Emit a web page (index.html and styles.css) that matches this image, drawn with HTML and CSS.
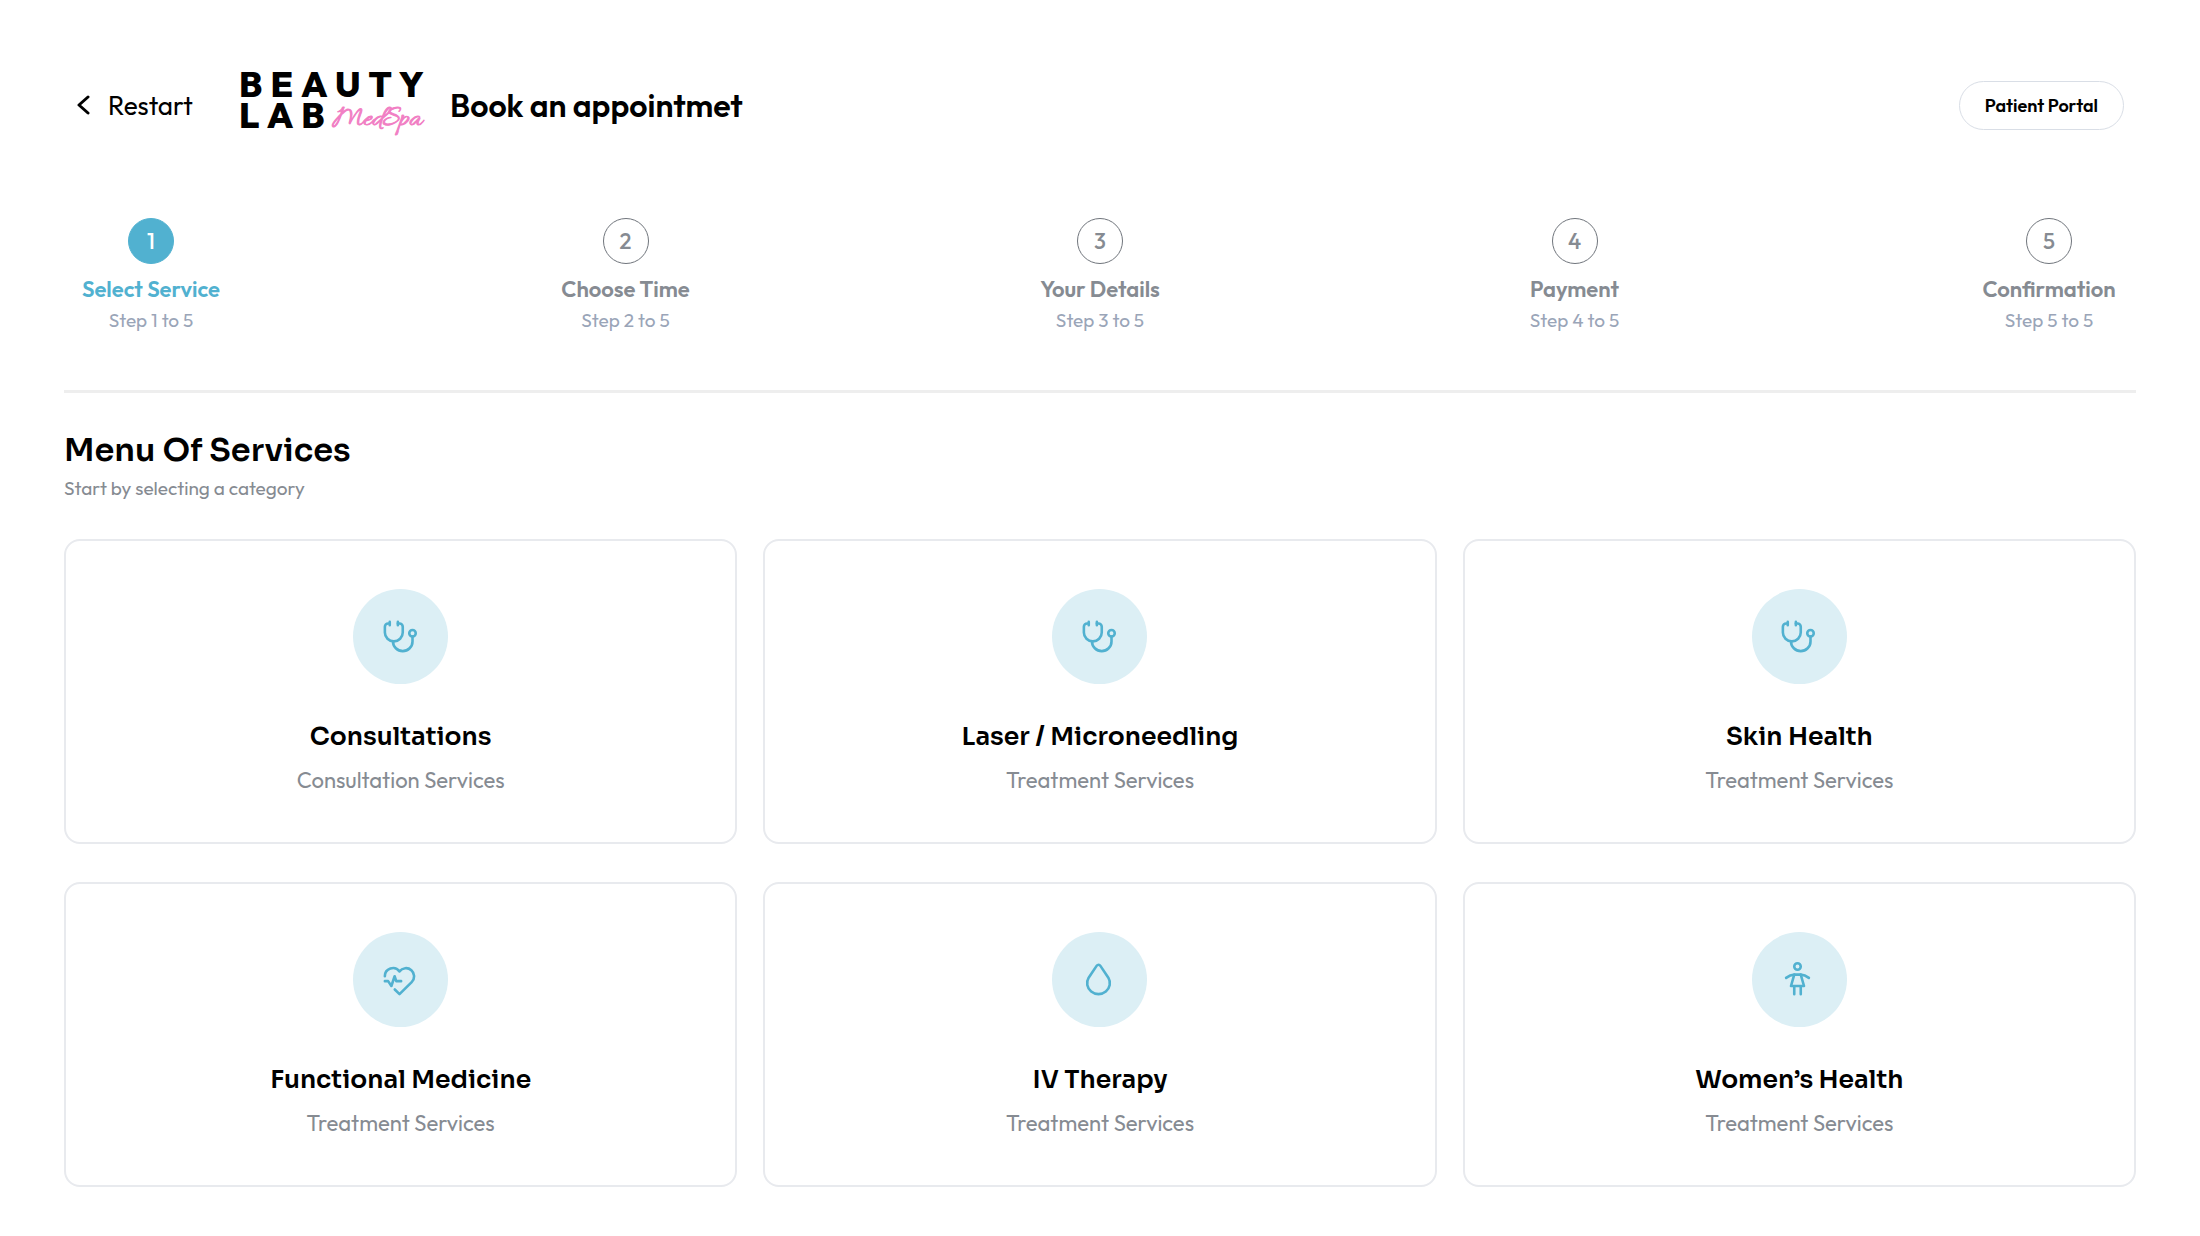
FILE: index.html
```html
<!DOCTYPE html>
<html lang="en">
<head>
  <meta charset="UTF-8">
  <meta name="viewport" content="width=device-width, initial-scale=1.0">
  <title>Book an appointment - Beauty Lab MedSpa</title>
  <link rel="stylesheet" href="styles.css">
</head>
<body>
  <!-- icon shapes shared by the service cards -->
  <svg class="icon-defs" aria-hidden="true">
    <symbol id="icon-stethoscope" viewBox="0 0 24 24">
      <path d="M6 4h-1a2 2 0 0 0 -2 2v3.5a5.5 5.5 0 0 0 11 0v-3.5a2 2 0 0 0 -2 -2h-1"/>
      <path d="M8 15a6 6 0 1 0 12 0v-3"/>
      <path d="M11 3v2M6 3v2"/>
      <circle cx="20" cy="10" r="2"/>
    </symbol>
    <symbol id="icon-heartbeat" viewBox="0 0 24 24">
      <path d="M19.5 13.572l-7.5 7.428l-2.896 -2.868m-6.117 -8.104a5 5 0 0 1 9.013 -3.022a5 5 0 1 1 7.5 6.572"/>
      <path d="M3 13h2l2 3l2 -6l1 3h3"/>
    </symbol>
    <symbol id="icon-droplet" viewBox="0 0 24 24">
      <path d="M7.502 19.423c2.602 2.105 6.395 2.105 8.996 0c2.602 -2.105 3.262 -5.708 1.566 -8.546l-4.89 -7.26c-.42 -.625 -1.287 -.803 -1.936 -.397a1.376 1.376 0 0 0 -.41 .397l-4.893 7.26c-1.695 2.838 -1.035 6.441 1.567 8.546z"/>
    </symbol>
    <symbol id="icon-woman" viewBox="0 0 24 24">
      <path d="M10 16v5M14 16v5M8 16h8l-2 -7h-4z"/>
      <path d="M5 11c1.667 -1.333 3.333 -2 5 -2M19 11c-1.667 -1.333 -3.333 -2 -5 -2"/>
      <circle cx="12" cy="4" r="2"/>
    </symbol>
  </svg>

  <header class="header">
    <button class="restart-btn" type="button">
      <svg class="chevron" viewBox="0 0 14 20" aria-hidden="true"><path d="M12 2L3 10l9 8"/></svg>
      Restart
    </button>
    <div class="logo">
      <div class="logo-line">BEAUTY</div>
      <div class="logo-row">
        <div class="logo-line">LAB</div>
        <div class="logo-script">MedSpa</div>
      </div>
    </div>
    <h1>Book an appointmet</h1>
    <a class="portal-btn" href="#">Patient Portal</a>
  </header>

  <ol class="steps">
    <li class="step active">
      <span class="step-number">1</span>
      <span class="step-name">Select Service</span>
      <span class="step-count">Step 1 to 5</span>
    </li>
    <li class="step">
      <span class="step-number">2</span>
      <span class="step-name">Choose Time</span>
      <span class="step-count">Step 2 to 5</span>
    </li>
    <li class="step">
      <span class="step-number">3</span>
      <span class="step-name">Your Details</span>
      <span class="step-count">Step 3 to 5</span>
    </li>
    <li class="step">
      <span class="step-number">4</span>
      <span class="step-name">Payment</span>
      <span class="step-count">Step 4 to 5</span>
    </li>
    <li class="step">
      <span class="step-number">5</span>
      <span class="step-name">Confirmation</span>
      <span class="step-count">Step 5 to 5</span>
    </li>
  </ol>

  <main class="services">
    <h2>Menu Of Services</h2>
    <p class="subtitle">Start by selecting a category</p>

    <div class="card-grid">
      <a class="card" href="#">
        <span class="card-icon"><svg><use href="#icon-stethoscope"/></svg></span>
        <h3>Consultations</h3>
        <p>Consultation Services</p>
      </a>
      <a class="card" href="#">
        <span class="card-icon"><svg><use href="#icon-stethoscope"/></svg></span>
        <h3>Laser / Microneedling</h3>
        <p>Treatment Services</p>
      </a>
      <a class="card" href="#">
        <span class="card-icon"><svg><use href="#icon-stethoscope"/></svg></span>
        <h3>Skin Health</h3>
        <p>Treatment Services</p>
      </a>
      <a class="card" href="#">
        <span class="card-icon"><svg><use href="#icon-heartbeat"/></svg></span>
        <h3>Functional Medicine</h3>
        <p>Treatment Services</p>
      </a>
      <a class="card" href="#">
        <span class="card-icon"><svg><use href="#icon-droplet"/></svg></span>
        <h3>IV Therapy</h3>
        <p>Treatment Services</p>
      </a>
      <a class="card" href="#">
        <span class="card-icon"><svg><use href="#icon-woman"/></svg></span>
        <h3>Women’s Health</h3>
        <p>Treatment Services</p>
      </a>
    </div>
  </main>
</body>
</html>
```
FILE: styles.css
```css
* {
  box-sizing: border-box;
}
body {
  margin: 0;
  padding: 63px 64px 48px;
  background: #fff;
  color: #000;
  font-family: 'Outfit', 'Lato', sans-serif;
}
h1, h2, h3, p {
  margin: 0;
}
a {
  color: inherit;
  text-decoration: none;
}
.icon-defs {
  display: none;
}

/* header */
.header {
  display: flex;
  align-items: center;
  height: 84px;
  padding: 0 12px;
}
.restart-btn {
  display: flex;
  align-items: center;
  gap: 18px;
  width: 163px;
  padding: 0;
  border: none;
  background: none;
  color: #000;
  font-family: inherit;
  font-size: 26px;
  cursor: pointer;
}
.chevron {
  width: 14px;
  height: 20px;
  fill: none;
  stroke: #000;
  stroke-width: 3;
  stroke-linecap: round;
  stroke-linejoin: round;
}
.logo {
  width: 211px;
  font-size: 36px;
  line-height: 31px;
}
.logo-line {
  font-weight: 800;
  letter-spacing: 8px;
}
.logo-row {
  display: flex;
  align-items: flex-start;
}
.logo-script {
  color: #f17fc4;
  font-family: 'Allura', 'Lato', cursive;
  font-size: 28px;
  line-height: 44px;
  -webkit-text-stroke: 1px #f17fc4;
}
h1 {
  font-size: 32px;
  font-weight: 600;
}
.portal-btn {
  display: flex;
  align-items: center;
  height: 49px;
  margin-left: auto;
  padding: 0 25px;
  border: 1px solid #d9dee6;
  border-radius: 25px;
  font-size: 18px;
  font-weight: 600;
}

/* progress steps */
.steps {
  display: flex;
  justify-content: space-between;
  margin: 0;
  padding: 71px 0 54px;
  border-bottom: 3px solid #eee;
  list-style: none;
}
.step {
  display: flex;
  flex-direction: column;
  align-items: center;
  width: 174px;
  color: #868b92;
}
.step-number {
  display: flex;
  align-items: center;
  justify-content: center;
  width: 46px;
  height: 46px;
  border: 1px solid #70757c;
  border-radius: 50%;
  font-size: 22px;
  font-weight: 500;
}
.step-name {
  margin-top: 10px;
  font-size: 22px;
  font-weight: 600;
  line-height: 30px;
}
.step-count {
  color: #9aa5b8;
  font-size: 19px;
  line-height: 32px;
}
.step.active {
  color: #51b1d0;
}
.step.active .step-number {
  border-color: #51b1d0;
  background: #51b1d0;
  color: #fff;
}

/* services */
.services {
  padding-top: 36px;
}
h2 {
  font-family: 'Sora', 'Inter', sans-serif;
  font-size: 32px;
  font-weight: 600;
  line-height: 42px;
}
.subtitle {
  color: #868b92;
  font-size: 19px;
  line-height: 34px;
}
.card-grid {
  display: grid;
  grid-template-columns: repeat(3, 1fr);
  gap: 38px 26px;
  margin-top: 34px;
}
.card {
  display: flex;
  flex-direction: column;
  align-items: center;
  height: 305px;
  padding-top: 48px;
  border: 2px solid #e8eaee;
  border-radius: 16px;
}
.card-icon {
  display: flex;
  align-items: center;
  justify-content: center;
  width: 95px;
  height: 95px;
  padding-right: 3px;
  border-radius: 50%;
  background: #dceff5;
}
.card-icon svg {
  width: 39px;
  height: 39px;
  fill: none;
  stroke: #51b1d0;
  stroke-width: 1.6;
  stroke-linecap: round;
  stroke-linejoin: round;
}
.card h3 {
  margin-top: 35px;
  font-family: 'Sora', 'Inter', sans-serif;
  font-size: 25px;
  font-weight: 600;
  line-height: 36px;
}
.card p {
  margin-top: 9px;
  color: #868b92;
  font-size: 22px;
  line-height: 32px;
}
```
